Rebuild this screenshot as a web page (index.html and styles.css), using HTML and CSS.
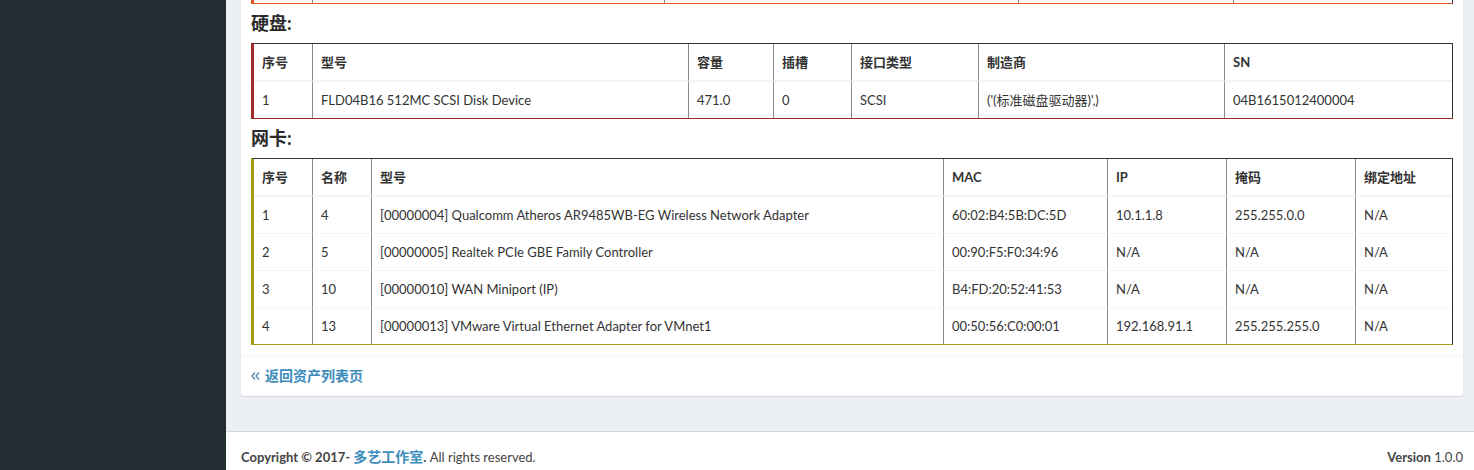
FILE: index.html
```html
<!DOCTYPE html>
<html lang="zh">
<head>
<meta charset="utf-8">
<title>资产详情</title>
<link rel="stylesheet" href="styles.css">
</head>
<body>
<div class="wrapper">
  <aside class="sidebar"></aside>
  <div class="main">
    <section class="content">
      <div class="box">
        <div class="box-body">
          <table class="tbl tbl-prev">
            <tbody>
              <tr><td class="p1"></td><td class="p2"></td><td class="p3"></td><td class="p4"></td><td class="p5"></td></tr>
            </tbody>
          </table>

          <h4 class="sec-title">硬盘:</h4>
          <table class="tbl tbl-disk">
            <thead>
              <tr>
                <th class="d1">序号</th><th class="d2">型号</th><th class="d3">容量</th><th class="d4">插槽</th><th class="d5">接口类型</th><th class="d6">制造商</th><th class="d7">SN</th>
              </tr>
            </thead>
            <tbody>
              <tr>
                <td>1</td><td>FLD04B16 512MC SCSI Disk Device</td><td>471.0</td><td>0</td><td>SCSI</td><td>('(标准磁盘驱动器)',)</td><td>04B1615012400004</td>
              </tr>
            </tbody>
          </table>

          <h4 class="sec-title">网卡:</h4>
          <table class="tbl tbl-nic">
            <thead>
              <tr>
                <th class="n1">序号</th><th class="n2">名称</th><th class="n3">型号</th><th class="n4">MAC</th><th class="n5">IP</th><th class="n6">掩码</th><th class="n7">绑定地址</th>
              </tr>
            </thead>
            <tbody>
              <tr><td>1</td><td>4</td><td>[00000004] Qualcomm Atheros AR9485WB-EG Wireless Network Adapter</td><td>60:02:B4:5B:DC:5D</td><td>10.1.1.8</td><td>255.255.0.0</td><td>N/A</td></tr>
              <tr><td>2</td><td>5</td><td>[00000005] Realtek PCIe GBE Family Controller</td><td>00:90:F5:F0:34:96</td><td>N/A</td><td>N/A</td><td>N/A</td></tr>
              <tr><td>3</td><td>10</td><td>[00000010] WAN Miniport (IP)</td><td>B4:FD:20:52:41:53</td><td>N/A</td><td>N/A</td><td>N/A</td></tr>
              <tr><td>4</td><td>13</td><td>[00000013] VMware Virtual Ethernet Adapter for VMnet1</td><td>00:50:56:C0:00:01</td><td>192.168.91.1</td><td>255.255.255.0</td><td>N/A</td></tr>
            </tbody>
          </table>
        </div>
        <div class="box-footer">
          <a class="back-link" href="#"><svg class="dbl" width="9" height="10" viewBox="0 0 9 10"><path d="M4 1.5 L1 5 L4 8.5 M8 1.5 L5 5 L8 8.5" fill="none" stroke="currentColor" stroke-width="1.4"/></svg><span>返回资产列表页</span></a>
        </div>
      </div>
    </section>
    <footer class="main-footer">
      <div class="copy"><strong>Copyright © 2017- <a href="#">多艺工作室</a>.</strong> All rights reserved.</div>
      <div class="version"><b>Version</b> 1.0.0</div>
    </footer>
  </div>
</div>
</body>
</html>
```

FILE: styles.css
```css
* { box-sizing: border-box; }

html, body {
  margin: 0;
  padding: 0;
  height: 470px;
  overflow: hidden;
}

body {
  font-family: Lato, "Noto Sans CJK SC", sans-serif;
  font-size: 13px;
  line-height: 20px;
  color: #333;
  background: #ecf0f5;
}

a { color: #3c8dbc; text-decoration: none; }

.wrapper {
  display: flex;
  height: 470px;
}

.sidebar {
  width: 226px;
  flex: 0 0 226px;
  background: #222d32;
}

.main {
  flex: 1;
  display: flex;
  flex-direction: column;
  background: #ecf0f5;
}

.content {
  padding: 0 11px 15px 15px;
}

.box {
  background: #fff;
  border-radius: 0 0 3px 3px;
  box-shadow: 0 1px 1px rgba(0,0,0,0.1);
  margin-bottom: 20px;
}

.box-body {
  padding: 0 10px 10px 10px;
}

.sec-title {
  margin: 10px 0;
  font-size: 18px;
  line-height: 19px;
  font-weight: bold;
  color: #2b2b2b;
  font-family: Lato, "Noto Sans CJK SC", sans-serif;
}

.tbl {
  width: 100%;
  table-layout: fixed;
  border-collapse: separate;
  border-spacing: 0;
  border-top: 1px solid #333;
  border-right: 1px solid #333;
  border-left: 3px solid #a52a2a;
  border-bottom: 1px solid #a52a2a;
}

.tbl th, .tbl td {
  padding: 8px;
  text-align: left;
  vertical-align: top;
  white-space: nowrap;
  overflow: hidden;
  border-right: 1px solid #888;
}

.tbl th:last-child, .tbl td:last-child { border-right: 0; }

.tbl th {
  font-weight: bold;
  border-bottom: 2px solid #f4f4f4;
}

.tbl tbody tr + tr td { border-top: 1px solid #f4f4f4; }

.tbl-prev {
  border-top: 0;
  border-left-color: #e4561f;
  border-bottom-color: #e4561f;
}
.tbl-prev td { padding: 0; height: 3px; }

.p1 { width: 59px; }
.p2 { width: 352px; }
.p3 { width: 354px; }
.p4 { width: 215px; }

.d1 { width: 59px; }
.d2 { width: 376px; }
.d3 { width: 85px; }
.d4 { width: 78px; }
.d5 { width: 127px; }
.d6 { width: 246px; }

.tbl-nic {
  border-left-color: #a69e17;
  border-bottom-color: #a69e17;
}
.n1 { width: 59px; }
.n2 { width: 59px; }
.n3 { width: 572px; }
.n4 { width: 164px; }
.n5 { width: 119px; }
.n6 { width: 129px; }

.box-footer {
  border-top: 1px solid #f4f4f4;
  padding: 10px;
}

.back-link {
  font-weight: bold;
  font-size: 14px;
  display: inline-flex;
  align-items: center;
  gap: 5px;
}
.dbl { color: #5a8aa8; }

.main-footer {
  background: #fff;
  border-top: 1px solid #d2d6de;
  padding: 15px;
  display: flex;
  justify-content: space-between;
  color: #444;
  flex: 1;
  padding-right: 11px;
}
.main-footer a { color: #3c8dbc; font-size: 14px; }
```
